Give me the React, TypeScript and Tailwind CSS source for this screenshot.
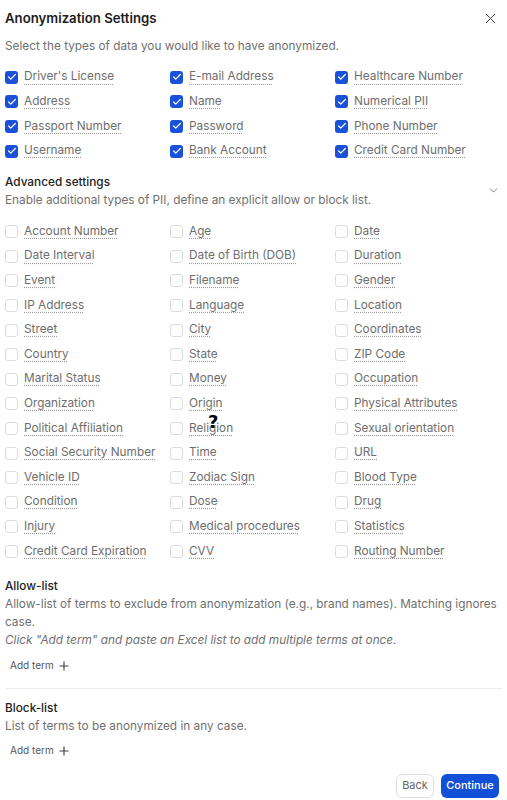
import { X, ChevronDown, Plus, Check } from "lucide-react";

const basic = [
  "Driver's License", "E-mail Address", "Healthcare Number",
  "Address", "Name", "Numerical PII",
  "Passport Number", "Password", "Phone Number",
  "Username", "Bank Account", "Credit Card Number",
];

const advanced = [
  "Account Number", "Age", "Date",
  "Date Interval", "Date of Birth (DOB)", "Duration",
  "Event", "Filename", "Gender",
  "IP Address", "Language", "Location",
  "Street", "City", "Coordinates",
  "Country", "State", "ZIP Code",
  "Marital Status", "Money", "Occupation",
  "Organization", "Origin", "Physical Attributes",
  "Political Affiliation", "Religion", "Sexual orientation",
  "Social Security Number", "Time", "URL",
  "Vehicle ID", "Zodiac Sign", "Blood Type",
  "Condition", "Dose", "Drug",
  "Injury", "Medical procedures", "Statistics",
  "Credit Card Expiration", "CVV", "Routing Number",
];

const Item = ({ label, checked }: { label: string; checked: boolean }) => (
  <div className="flex items-center h-[24.6px] gap-[6px] relative">
    {checked ? (
      <span className="w-[13px] h-[13px] rounded-[3px] bg-[#1a51d9] flex items-center justify-center shrink-0">
        <Check size={10} strokeWidth={3} className="text-white" />
      </span>
    ) : (
      <span className="w-[13px] h-[13px] rounded-[3px] border border-[#dcdcdc] bg-white shrink-0" />
    )}
    <span className="text-[11.8px] text-[#6e6e6e] underline decoration-dotted decoration-[#9a9a9a] underline-offset-[3px] whitespace-nowrap">
      {label}
    </span>
    {label === "Religion" && (
      <span className="absolute left-[38px] top-[-8px] text-[18px] font-bold text-black font-['DejaVu_Sans']">?</span>
    )}
  </div>
);

const AddTerm = () => (
  <button className="flex items-center gap-[3px] pl-[5px] text-[10px] text-[#555] h-[18px]">
    Add term <Plus size={14} strokeWidth={2} className="text-[#444]" />
  </button>
);

export default function App() {
  return (
    <div className="w-[507px] h-[800px] bg-white px-[5px] pt-[1px] font-['Inter',sans-serif] overflow-hidden">
      <div className="flex items-center justify-between pt-[7px] h-[27px]">
        <h2 className="text-[13.2px] font-semibold text-[#1c1c1c] leading-[20px]">Anonymization Settings</h2>
        <X size={17} strokeWidth={1.4} className="text-[#444] mr-[3px]" />
      </div>
      <p className="mt-[9px] text-[11.8px] leading-[18px] text-[#707070]">
        Select the types of data you would like to have anonymized.
      </p>
      <div className="mt-[10px] grid grid-cols-[165px_165px_165px]">
        {basic.map((l) => (
          <Item key={l} label={l} checked />
        ))}
      </div>
      <div className="mt-[10px] flex items-start justify-between">
        <div>
          <div className="text-[11.8px] leading-[18px] font-medium text-[#222]">Advanced settings</div>
          <div className="text-[11.8px] leading-[18px] text-[#707070]">
            Enable additional types of PII, define an explicit allow or block list.
          </div>
        </div>
        <ChevronDown size={13} strokeWidth={1.5} className="text-[#666] mt-[11px] mr-[2px]" />
      </div>
      <div className="mt-[10px] grid grid-cols-[165px_165px_165px]">
        {advanced.map((l) => (
          <Item key={l} label={l} checked={false} />
        ))}
      </div>
      <div className="mt-[13px] w-[493px]">
        <div className="text-[11.8px] leading-[18px] font-medium text-[#222]">Allow-list</div>
        <p className="text-[11.8px] leading-[18px] text-[#707070]">
          Allow-list of terms to exclude from anonymization (e.g., brand names). Matching ignores case.
        </p>
        <p className="text-[11.8px] leading-[18px] text-[#707070] italic">
          Click "Add term" and paste an Excel list to add multiple terms at once.
        </p>
        <div className="mt-[8px]">
          <AddTerm />
        </div>
      </div>
      <div className="mt-[13px] border-t border-[#ececec]" />
      <div className="mt-[10px]">
        <div className="text-[11.8px] leading-[18px] font-medium text-[#222]">Block-list</div>
        <p className="text-[11.8px] leading-[18px] text-[#707070]">List of terms to be anonymized in any case.</p>
        <div className="mt-[7px]">
          <AddTerm />
        </div>
      </div>
      <div className="mt-[14px] flex justify-end gap-[7px] pr-[3px]">
        <button className="h-[24px] w-[38px] rounded-[6px] border border-[#dedede] text-[11px] text-[#666] bg-white">
          Back
        </button>
        <button className="h-[24px] w-[58px] rounded-[6px] bg-[#1250d8] text-[11px] font-medium text-white">
          Continue
        </button>
      </div>
    </div>
  );
}
